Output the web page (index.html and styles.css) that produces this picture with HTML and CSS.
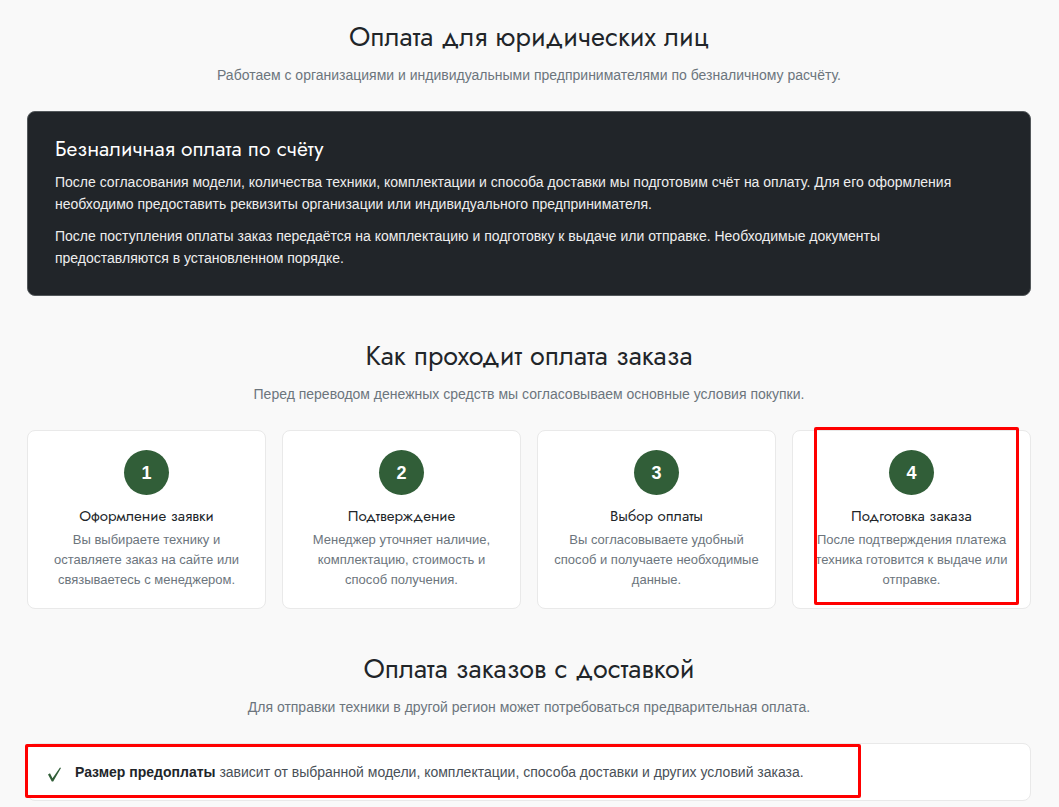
FILE: index.html
```
<!DOCTYPE html>
<html lang="ru">
<head>
    <meta charset="UTF-8">
    <meta name="viewport" content="width=device-width, initial-scale=1.0">
    <title>Оплата</title>
    <link rel="stylesheet" href="styles.css">
</head>
<body>
    <main class="payment">
        <section class="payment-section">
            <h2>Оплата для юридических лиц</h2>
            <p class="section-lead">Работаем с организациями и индивидуальными предпринимателями по безналичному расчёту.</p>
            <div class="invoice-box">
                <h3>Безналичная оплата по счёту</h3>
                <p>После согласования модели, количества техники, комплектации и способа доставки мы подготовим счёт на оплату. Для его оформления необходимо предоставить реквизиты организации или индивидуального предпринимателя.</p>
                <p>После поступления оплаты заказ передаётся на комплектацию и подготовку к выдаче или отправке. Необходимые документы предоставляются в установленном порядке.</p>
            </div>
        </section>

        <section class="payment-section">
            <h2>Как проходит оплата заказа</h2>
            <p class="section-lead">Перед переводом денежных средств мы согласовываем основные условия покупки.</p>
            <div class="steps">
                <div class="step">
                    <div class="step-number">1</div>
                    <h3>Оформление заявки</h3>
                    <p>Вы выбираете технику и оставляете заказ на сайте или связываетесь с менеджером.</p>
                </div>
                <div class="step">
                    <div class="step-number">2</div>
                    <h3>Подтверждение</h3>
                    <p>Менеджер уточняет наличие, комплектацию, стоимость и способ получения.</p>
                </div>
                <div class="step">
                    <div class="step-number">3</div>
                    <h3>Выбор оплаты</h3>
                    <p>Вы согласовываете удобный способ и получаете необходимые данные.</p>
                </div>
                <div class="step">
                    <div class="step-number">4</div>
                    <h3>Подготовка заказа</h3>
                    <p>После подтверждения платежа техника готовится к выдаче или отправке.</p>
                    <span class="mark mark-step"></span>
                </div>
            </div>
        </section>

        <section class="payment-section">
            <h2>Оплата заказов с доставкой</h2>
            <p class="section-lead">Для отправки техники в другой регион может потребоваться предварительная оплата.</p>
            <div class="notice">
                <svg class="notice-check" viewBox="0 0 14 16" aria-hidden="true">
                    <path d="M0 7.4 2 6.2 4.5 11.2 12 0.6 13 1 5.2 14.6H3.8Z"/>
                </svg>
                <p><strong>Размер предоплаты</strong> зависит от выбранной модели, комплектации, способа доставки и других условий заказа.</p>
                <span class="mark mark-notice"></span>
            </div>
        </section>
    </main>
</body>
</html>
```
FILE: styles.css
```
* {
    box-sizing: border-box;
}
body {
    margin: 0;
    background-color: #f9f9f9;
    color: #212529;
    font-family: Arial, "Liberation Sans", sans-serif;
    font-size: 14px;
    line-height: 22px;
}
h2, h3, p {
    margin: 0;
}
h2, h3 {
    font-family: Jost, Lato, sans-serif;
    font-weight: 400;
}
.payment {
    display: flex;
    flex-direction: column;
    gap: 43px;
    padding: 20px 28px 7px 27px;
}
h2 {
    margin-bottom: 10px;
    font-size: 27px;
    line-height: 34px;
    text-align: center;
}
.section-lead {
    margin-bottom: 25px;
    color: #6c757d;
    text-align: center;
}
.invoice-box {
    padding: 26px 40px 26px 27px;
    border: 1px solid #53585b;
    border-radius: 8px;
    background-color: #212529;
    color: #eee;
}
.invoice-box h3 {
    margin-bottom: 11px;
    color: #fff;
    font-size: 21px;
    line-height: 22px;
}
.invoice-box p + p {
    margin-top: 10px;
}
.steps {
    display: grid;
    grid-template-columns: repeat(4, 1fr);
    gap: 16px;
}
.step {
    position: relative;
    padding: 19px 16px 18px;
    border: 1px solid #e9e9e9;
    border-radius: 8px;
    background-color: #fff;
    text-align: center;
}
.step-number {
    display: flex;
    align-items: center;
    justify-content: center;
    width: 45px;
    height: 45px;
    margin: 0 auto 10px;
    border-radius: 50%;
    background-color: #315e38;
    color: #fff;
    font-size: 18px;
    font-weight: 700;
}
.step h3 {
    margin-bottom: 3px;
    font-size: 15px;
    line-height: 22px;
}
.step p {
    color: #6c757d;
    font-size: 13px;
    line-height: 20px;
}
.notice {
    position: relative;
    display: flex;
    align-items: flex-end;
    gap: 13px;
    padding: 17px 20px;
    border: 1px solid #e9e9e9;
    border-radius: 8px;
    background-color: #fff;
    color: #495057;
}
.notice-check {
    flex: none;
    width: 14px;
    height: 16px;
    fill: #315e38;
}
.notice strong {
    color: #212529;
}
/* red highlight frames */
.mark {
    position: absolute;
    border: 3px solid #f00;
    border-radius: 2px;
    pointer-events: none;
}
.mark-step {
    top: -4px;
    right: 11px;
    bottom: 3px;
    left: 21px;
}
.mark-notice {
    top: 0;
    right: 169px;
    bottom: 2px;
    left: -3px;
}
```
